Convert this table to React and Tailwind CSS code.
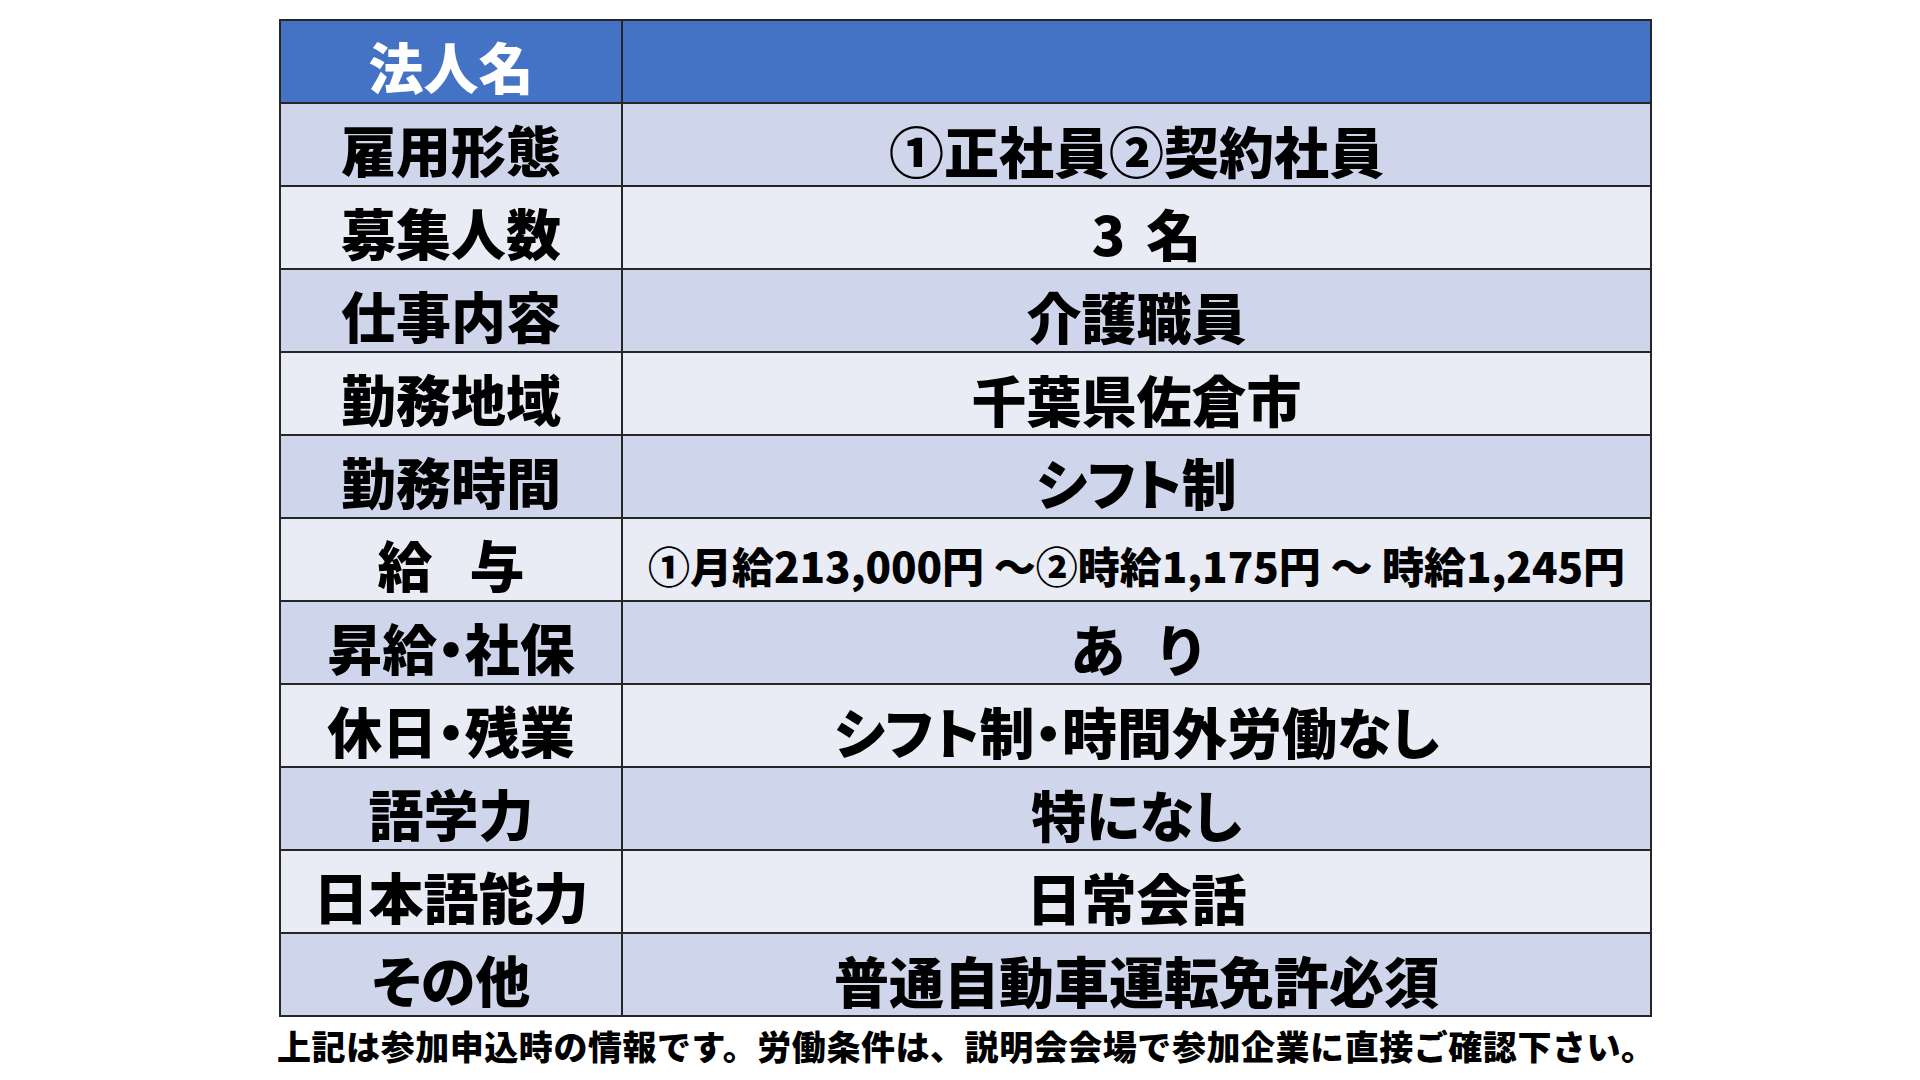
import React from "react";

const Gap = ({ w }) => <span className={`inline-block ${w}`}></span>;

const rows = [
  { label: "雇用形態", value: "①正社員②契約社員", dark: true },
  {
    label: "募集人数",
    value: (
      <>
        <Gap w="w-[20px]" />3<Gap w="w-[21px]" />名
      </>
    ),
    dark: false,
  },
  { label: "仕事内容", value: "介護職員", dark: true },
  { label: "勤務地域", value: "千葉県佐倉市", dark: false },
  { label: "勤務時間", value: "シフト制", dark: true },
  {
    label: (
      <>
        給<Gap w="w-[37px]" />与
      </>
    ),
    value: "①月給213,000円 ～②時給1,175円 ～ 時給1,245円",
    dark: false,
    small: true,
  },
  {
    label: "昇給・社保",
    value: (
      <>
        あ<Gap w="w-[34px]" />り
      </>
    ),
    dark: true,
  },
  { label: "休日・残業", value: "シフト制・時間外労働なし", dark: false },
  { label: "語学力", value: "特になし", dark: true },
  { label: "日本語能力", value: "日常会話", dark: false },
  { label: "その他", value: "普通自動車運転免許必須", dark: true },
];

const font = {
  fontFamily: '"Noto Sans CJK JP", "Noto Sans", sans-serif',
};

const App = () => {
  return (
    <div className="w-[1920px] h-[1080px] bg-white overflow-hidden" style={font}>
      <div className="ml-[279px] pt-[19px] w-[1373px]">
        <div className="grid grid-cols-[340px_1fr] gap-[2px] p-[2px] bg-[#262626] font-black leading-none text-black [font-feature-settings:'palt']">
          <div className="h-[81px] bg-[#4472C4] flex items-center justify-center pt-[8px] text-[55px] text-white">
            法人名
          </div>
          <div className="h-[81px] bg-[#4472C4]"></div>

          {rows.map((row, i) => (
            <React.Fragment key={i}>
              <div
                className={`h-[81px] flex items-center justify-center pt-[8px] text-[55px] ${
                  row.dark ? "bg-[#CFD5EA]" : "bg-[#E9EBF5]"
                }`}
              >
                {row.label}
              </div>
              <div
                className={`h-[81px] flex items-center justify-center pt-[10px] whitespace-pre ${
                  row.small ? "text-[42px]" : "text-[55px]"
                } ${row.dark ? "bg-[#CFD5EA]" : "bg-[#E9EBF5]"}`}
              >
                {row.value}
              </div>
            </React.Fragment>
          ))}
        </div>

        <p className="mt-[12px] -ml-[2px] text-[34px] font-black leading-none tracking-[0.55px] text-black whitespace-nowrap">
          上記は参加申込時の情報です。労働条件は、説明会会場で参加企業に直接ご確認下さい。
        </p>
      </div>
    </div>
  );
};

export default App;
